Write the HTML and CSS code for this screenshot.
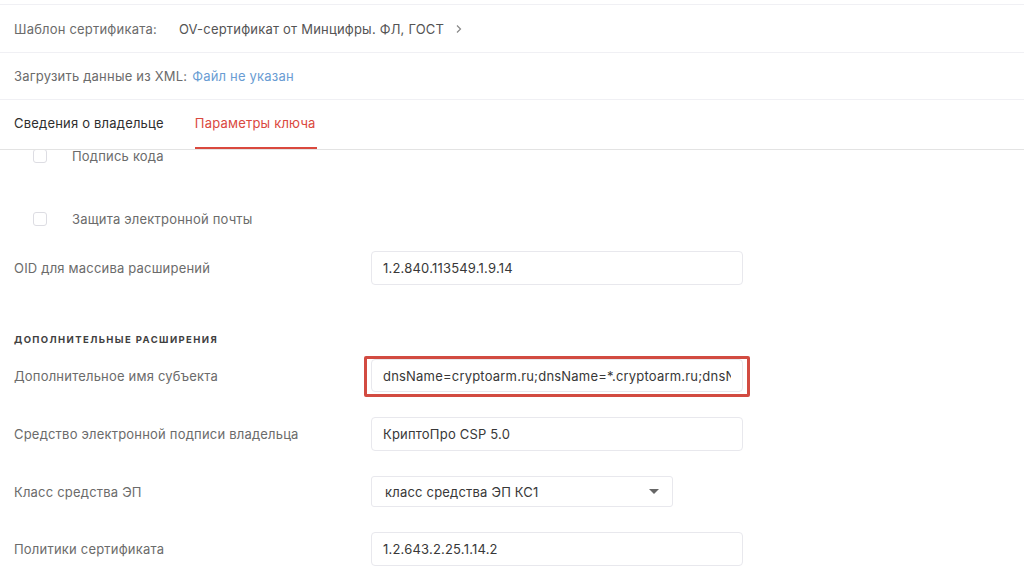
FILE: index.html
```html
<!DOCTYPE html>
<html lang="ru">
  <head>
    <meta charset="UTF-8" />
    <title>Параметры ключа</title>
    <link rel="stylesheet" href="styles.css">
  </head>
  <body>
    <div class="request">
      <div class="request__row">
        <span class="request__label">Шаблон сертификата:</span>
        <span class="request__template">OV-сертификат от Минцифры. ФЛ, ГОСТ</span>
        <svg class="request__chevron" width="8" height="10" viewBox="0 0 8 10">
          <path d="M2 1.5 L5.5 5 L2 8.5" fill="none" stroke="#888" stroke-width="1.2" />
        </svg>
      </div>

      <div class="request__row">
        <span class="request__label">Загрузить данные из XML:</span>
        <a class="request__link" href="#">Файл не указан</a>
      </div>

      <nav class="tabs">
        <a class="tabs__item" href="#">Сведения о владельце</a>
        <a class="tabs__item tabs__item--active" href="#">Параметры ключа</a>
      </nav>

      <section class="params">
        <div class="params__inner">
          <label class="check">
            <span class="check__box"></span>
            <span class="check__text">Подпись кода</span>
          </label>

          <label class="check check--second">
            <span class="check__box"></span>
            <span class="check__text">Защита электронной почты</span>
          </label>

          <div class="field field--oid">
            <span class="field__label">OID для массива расширений</span>
            <div class="field__control">
              <input class="field__input" type="text" value="1.2.840.113549.1.9.14" />
            </div>
          </div>

          <h4 class="params__title">Дополнительные расширения</h4>

          <div class="field field--alt">
            <span class="field__label">Дополнительное имя субъекта</span>
            <div class="field__control field__control--marked">
              <input class="field__input" type="text" value="dnsName=cryptoarm.ru;dnsName=*.cryptoarm.ru;dnsName=www.cryptoarm.ru" />
            </div>
          </div>

          <div class="field">
            <span class="field__label">Средство электронной подписи владельца</span>
            <div class="field__control">
              <input class="field__input" type="text" value="КриптоПро CSP 5.0" />
            </div>
          </div>

          <div class="field field--select">
            <span class="field__label">Класс средства ЭП</span>
            <div class="field__control">
              <div class="select">
                <span class="select__value">класс средства ЭП КС1</span>
                <span class="select__arrow"></span>
              </div>
            </div>
          </div>

          <div class="field field--policy">
            <span class="field__label">Политики сертификата</span>
            <div class="field__control">
              <input class="field__input" type="text" value="1.2.643.2.25.1.14.2" />
            </div>
          </div>
        </div>
      </section>
    </div>
  </body>
</html>
```

FILE: styles.css
```css
:root {
  --color-accent: hsl(4, 68%, 55%);
  --color-mark: hsl(4, 62%, 54%);
  --color-link: hsl(211, 55%, 62%);
  --color-main: hsl(0, 0%, 22%);
  --color-label: hsl(0, 0%, 42%);
  --color-line: hsl(240, 14%, 95%);
  --color-border: hsl(240, 12%, 92%);
  --color-bg: hsl(0, 0%, 100%);
}

* {
  box-sizing: border-box;
  margin: 0;
  padding: 0;
}

html,
body {
  height: 100%;
  background-color: var(--color-bg);
  font-family: Inter, "Noto Sans", sans-serif;
  font-size: 13px;
  letter-spacing: 0.2px;
  color: var(--color-main);
}

body {
  overflow: hidden;
}

a {
  text-decoration: none;
}

.request {
  padding-top: 4px;
}

.request__row {
  display: flex;
  align-items: center;
  height: 48px;
  padding-left: 14px;
  border-top: 1px solid var(--color-line);
}

.request__row + .request__row {
  height: 47px;
}

.request__label {
  color: var(--color-label);
}

.request__template {
  margin-left: 22px;
  color: hsl(0, 0%, 33%);
}

.request__chevron {
  margin-left: 11px;
}

.request__link {
  margin-left: 5px;
  color: var(--color-link);
}

.tabs {
  display: flex;
  gap: 31px;
  height: 51px;
  padding-left: 14px;
  border-top: 1px solid var(--color-line);
  border-bottom: 1px solid hsl(0, 0%, 89%);
}

.tabs__item {
  display: flex;
  align-items: center;
  padding-bottom: 2px;
  border-bottom: 2px solid transparent;
  color: hsl(0, 0%, 18%);
}

.tabs__item--active {
  color: var(--color-accent);
  border-bottom-color: var(--color-accent);
  padding-right: 1px;
}

.params {
  height: 430px;
  overflow: hidden;
}

/* list is scrolled a few pixels down */
.params__inner {
  display: flex;
  flex-direction: column;
  margin-top: -5px;
}

.check {
  display: flex;
  align-items: center;
  height: 22px;
  padding-left: 33px;
  color: var(--color-label);
}

.check--second {
  margin-top: 41px;
}

.check__box {
  width: 14px;
  height: 14px;
  border: 1px solid hsl(240, 10%, 88%);
  border-radius: 3px;
  background-color: var(--color-bg);
}

.check__text {
  margin-left: 25px;
  line-height: 12px;
}

.field {
  display: grid;
  grid-template-columns: 357px 372px;
  align-items: center;
  padding-left: 14px;
  margin-top: 25px;
}

.field--oid {
  margin-top: 21px;
}

.field--alt {
  margin-top: 13px;
}

.field--select {
  margin-top: 25px;
}

.field--policy {
  margin-top: 25px;
}

.field__label {
  color: var(--color-label);
}

.field__control {
  position: relative;
}

.field__control--marked::after {
  content: "";
  position: absolute;
  top: -3px;
  left: -7px;
  right: -7px;
  bottom: -5px;
  border: 3px solid var(--color-mark);
  border-radius: 2px;
  pointer-events: none;
}

.field__input {
  display: block;
  width: 100%;
  height: 34px;
  padding: 0 11px;
  border: 1px solid var(--color-border);
  border-radius: 4px;
  font-family: inherit;
  font-size: 13px;
  letter-spacing: 0.2px;
  color: var(--color-main);
  background-color: var(--color-bg);
  outline: none;
}

.field--alt .field__input {
  height: 33px;
}

.select {
  display: flex;
  align-items: center;
  justify-content: space-between;
  width: 302px;
  height: 31px;
  padding: 0 13px 0 13px;
  border: 1px solid var(--color-border);
  border-radius: 3px;
}

.select__arrow {
  width: 0;
  height: 0;
  border-left: 5px solid transparent;
  border-right: 5px solid transparent;
  border-top: 5px solid hsl(0, 0%, 40%);
}

.params__title {
  margin-top: 49px;
  padding-left: 14px;
  font-size: 9.5px;
  font-weight: 700;
  letter-spacing: 1.4px;
  text-transform: uppercase;
  color: hsl(0, 0%, 25%);
  line-height: 12px;
}
```
